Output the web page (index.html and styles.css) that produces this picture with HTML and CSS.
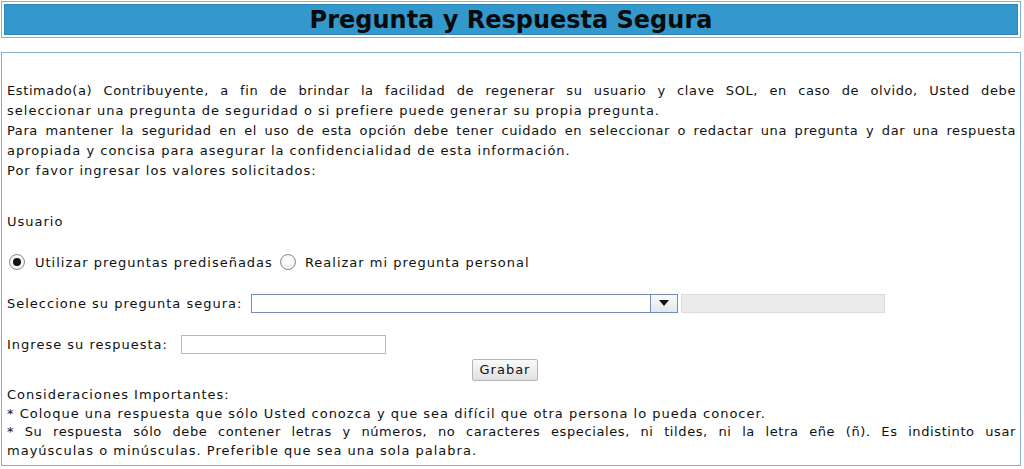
FILE: index.html
```html
<!DOCTYPE html>
<html lang="es">
<head>
<meta charset="utf-8">
<title>Pregunta y Respuesta Segura</title>
<link rel="stylesheet" href="styles.css">
</head>
<body>
<div class="page">
  <div class="title-box">
    <div class="title-bar">Pregunta y Respuesta Segura</div>
  </div>

  <div class="panel">
    <div class="intro">
      <span class="jline">Estimado(a) Contribuyente, a fin de brindar la facilidad de regenerar su usuario y clave SOL, en caso de olvido, Usted debe</span>
      <span class="line">seleccionar una pregunta de seguridad o si prefiere puede generar su propia pregunta.</span>
      <span class="jline">Para mantener la seguridad en el uso de esta opción debe tener cuidado en seleccionar o redactar una pregunta y dar una respuesta</span>
      <span class="line">apropiada y concisa para asegurar la confidencialidad de esta información.</span>
      <span class="line">Por favor ingresar los valores solicitados:</span>
    </div>

    <div class="usuario">Usuario</div>

    <div class="radios">
      <label class="radio-opt"><span class="radio checked"></span>Utilizar preguntas prediseñadas</label>
      <label class="radio-opt"><span class="radio"></span>Realizar mi pregunta personal</label>
    </div>

    <div class="field-row select-row">
      <span class="label">Seleccione su pregunta segura:</span>
      <span class="combo">
        <span class="combo-text"></span>
        <span class="combo-btn"><span class="tri"></span></span>
      </span>
      <span class="disabled-input"></span>
    </div>

    <div class="field-row answer-row">
      <span class="label">Ingrese su respuesta:</span>
      <span class="text-input"></span>
    </div>

    <div class="btn-row">
      <span class="btn">Grabar</span>
    </div>

    <div class="notes">
      <span class="line">Consideraciones Importantes:</span>
      <span class="line">* Coloque una respuesta que sólo Usted conozca y que sea difícil que otra persona lo pueda conocer.</span>
      <span class="jline">* Su respuesta sólo debe contener letras y números, no caracteres especiales, ni tildes, ni la letra eñe (ñ). Es indistinto usar</span>
      <span class="line">mayúsculas o minúsculas. Preferible que sea una sola palabra.</span>
    </div>
  </div>
</div>
</body>
</html>
```

FILE: styles.css
```css
* { box-sizing: border-box; }

html, body {
  margin: 0;
  padding: 0;
  background: #ffffff;
}

body {
  font-family: "DejaVu Sans", Verdana, sans-serif;
  font-size: 13px;
  letter-spacing: 1px;
  color: #111111;
}

.page {
  width: 1021px;
  padding: 1px 0 0 1px;
}

.title-box {
  height: 37px;
  border: 1px solid #86aed2;
  padding: 2px;
  background: #fff;
}

.title-bar {
  height: 100%;
  background: #3399cc;
  border: 1px solid #2d86b8;
  color: #0a0a0a;
  font-weight: bold;
  font-size: 24px;
  letter-spacing: 0;
  line-height: 30px;
  text-align: center;
}

.panel {
  margin-top: 14px;
  height: 414px;
  border: 1px solid #86aed2;
  padding: 28px 4px 0 5px;
}

.intro .line,
.intro .jline {
  display: block;
  line-height: 20px;
  height: 20px;
}

.jline {
  display: block;
  letter-spacing: 0.6px;
  text-align: justify;
  text-align-last: justify;
}

.usuario {
  margin-top: 31px;
  line-height: 20px;
}

.radios {
  margin-top: 20px;
  display: flex;
  align-items: center;
  height: 20px;
}

.radio-opt {
  display: flex;
  align-items: center;
}

.radio-opt + .radio-opt {
  margin-left: 7px;
}

.radio {
  width: 16px;
  height: 16px;
  border-radius: 50%;
  border: 1px solid #8a8a8a;
  background: radial-gradient(circle at 50% 40%, #ffffff 0%, #ececec 100%);
  margin: 0 10px 0 2px;
  display: inline-flex;
  align-items: center;
  justify-content: center;
}

.radio-opt + .radio-opt .radio {
  margin-left: 0;
  margin-right: 9px;
}

.radio.checked::after {
  content: "";
  width: 8px;
  height: 8px;
  border-radius: 50%;
  background: #111;
}

.field-row {
  display: flex;
  align-items: center;
  height: 20px;
}

.select-row {
  margin-top: 21px;
}

.select-row .label {
  margin-right: 9px;
}

.combo {
  display: flex;
  width: 427px;
  height: 19px;
  border: 1px solid #6f8fbb;
  background: #fff;
}

.combo-text {
  flex: 1;
}

.combo-btn {
  width: 27px;
  border-left: 1px solid #6f8fbb;
  background: linear-gradient(#fbfbfb, #e4e6ea);
  display: flex;
  align-items: center;
  justify-content: center;
}

.tri {
  width: 0;
  height: 0;
  border-left: 5px solid transparent;
  border-right: 5px solid transparent;
  border-top: 6px solid #111;
}

.disabled-input {
  margin-left: 3px;
  width: 204px;
  height: 19px;
  background: #ebebeb;
  border: 1px solid #dcdcdc;
}

.answer-row {
  margin-top: 21px;
}

.answer-row .label {
  margin-right: 13px;
}

.text-input {
  width: 205px;
  height: 19px;
  border: 1px solid #b9b9b9;
  background: #fff;
}

.btn-row {
  margin-top: 5px;
  display: flex;
  justify-content: center;
  padding-right: 13px;
}

.btn {
  width: 66px;
  height: 22px;
  line-height: 20px;
  text-align: center;
  border: 1px solid #b5b5b5;
  border-radius: 2px;
  background: linear-gradient(#fafafa, #e0e0e0);
  color: #111;
}

.notes {
  margin-top: 5px;
}

.notes .line,
.notes .jline {
  display: block;
  line-height: 18.5px;
  height: 18.5px;
}
```
